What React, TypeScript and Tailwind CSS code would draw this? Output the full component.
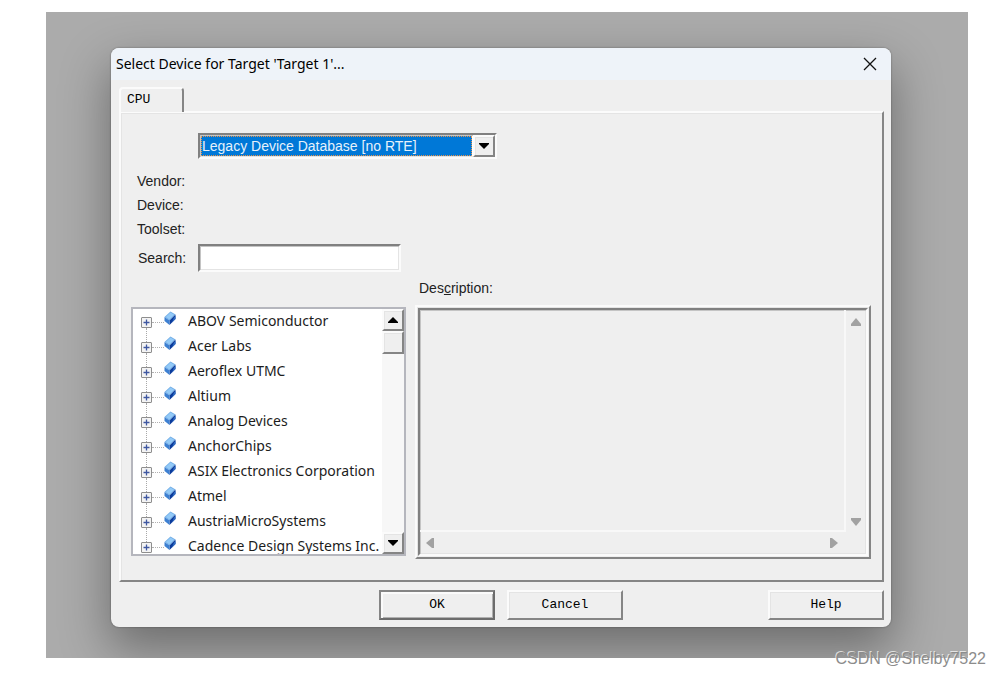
import { useState } from 'react';
import clsx from 'clsx';

const VENDORS = [
  'ABOV Semiconductor',
  'Acer Labs',
  'Aeroflex UTMC',
  'Altium',
  'Analog Devices',
  'AnchorChips',
  'ASIX Electronics Corporation',
  'Atmel',
  'AustriaMicroSystems',
  'Cadence Design Systems Inc.',
];

// Classic Windows bevels
const RAISED =
  'border-2 border-t-[#fbfbfb] border-l-[#fbfbfb] border-b-[#858585] border-r-[#858585] shadow-[inset_1px_1px_0_#e4e4e4]';
const SUNKEN =
  'border-2 border-t-[#808080] border-l-[#808080] border-b-[#fbfbfb] border-r-[#fbfbfb] shadow-[inset_1px_1px_0_#c4c4c4,inset_-1px_-1px_0_#e4e4e4]';

const LABEL = "font-['Liberation_Sans',Arial,sans-serif] text-[14px] leading-4 text-[#222]";
const MONO = "font-['Liberation_Mono',monospace] text-[13px] leading-4 text-black";

type Direction = 'up' | 'down' | 'left' | 'right';

const ARROWS: Record<Direction, string> = {
  up: 'M6 3 L11 8 L11 9 L1 9 L1 8 Z',
  down: 'M6 9 L11 4 L11 3 L1 3 L1 4 Z',
  left: 'M2 6 L8 1 L9 1 L9 11 L8 11 Z',
  right: 'M10 6 L4 1 L3 1 L3 11 L4 11 Z',
};

const MUTED_ARROWS: Record<Direction, string> = {
  up: 'M6 2 L11 8 L11 10 L1 10 L1 8 Z',
  down: 'M6 10 L11 4 L11 2 L1 2 L1 4 Z',
  left: 'M2 6 L8 1 L10 1 L10 11 L8 11 Z',
  right: 'M10 6 L4 1 L2 1 L2 11 L4 11 Z',
};

function Arrow({ direction, muted = false }: { direction: Direction; muted?: boolean }) {
  return (
    <svg viewBox="0 0 12 12" className={clsx('size-3', muted ? 'fill-[#a2a2a2]' : 'fill-black')} aria-hidden="true">
      <path d={muted ? MUTED_ARROWS[direction] : ARROWS[direction]} />
    </svg>
  );
}

function ChipIcon() {
  return (
    <svg viewBox="0 0 12 15" className="h-[15px] w-3" aria-hidden="true">
      <path d="M6.5 0.5 L11.5 3.5 L5.5 9.5 L0.5 6 Z" fill="#73aee6" />
      <path d="M6.5 1.5 L10.2 3.8 L5.4 8.4 L1.8 6 Z" fill="#93caf8" />
      <path d="M11.5 3.5 L11.5 8 L5.5 14 L5.5 9.5 Z" fill="#0b3b9b" />
      <path d="M10 6.5 L11.5 5 L11.5 8 L8 11.5 Z" fill="#2f6cc4" />
      <path d="M0.5 6 L5.5 9.5 L5.5 14 L0.5 10 Z" fill="#3d80d2" />
    </svg>
  );
}

function PlusBox() {
  return (
    <svg viewBox="0 0 11 11" className="size-[11px]" aria-hidden="true">
      <rect x="0.5" y="0.5" width="10" height="10" rx="0.5" fill="#f4f4f4" stroke="#8e8e8e" />
      <path d="M2.5 5.5 H8.5 M5.5 2.5 V8.5" stroke="#3f57a0" strokeWidth="1.3" />
    </svg>
  );
}

function VendorRow({ name, last }: { name: string; last: boolean }) {
  return (
    <li className="flex h-[25px] shrink-0 items-start">
      <div className="flex w-[11px] shrink-0 flex-col items-center self-stretch pt-2">
        <button type="button" aria-label={`Expand ${name}`} className="block">
          <PlusBox />
        </button>
        {!last && <span className="-mb-2 w-px flex-1 border-l border-dotted border-[#a8a8a8]" />}
      </div>
      <span className="mt-[13px] w-3 border-t border-dotted border-[#b0b0b0]" />
      <span className="mt-0.5 block w-6">
        <ChipIcon />
      </span>
      <span className="pt-0.5 font-['Noto_Sans','Open_Sans',sans-serif] text-[14px] leading-5 whitespace-nowrap text-[#1c1c1c]">
        {name}
      </span>
    </li>
  );
}

function VendorTree() {
  return (
    <div className="flex h-[249px] w-[275px] shrink-0 border-2 border-[#b5b6bd] bg-white">
      <ul className="flex min-w-0 flex-1 flex-col overflow-hidden pl-2">
        {VENDORS.map((name, i) => (
          <VendorRow key={name} name={name} last={i === VENDORS.length - 1} />
        ))}
      </ul>
      <div className="flex w-[22px] flex-col bg-[#f7f7f7]">
        <button type="button" aria-label="Scroll up" className={clsx('flex h-[22px] items-center justify-center bg-[#efefef]', RAISED)}>
          <Arrow direction="up" />
        </button>
        <div className={clsx('h-[23px] bg-[#efefef]', RAISED)} />
        <button type="button" aria-label="Scroll down" className={clsx('mt-auto flex h-[22px] items-center justify-center bg-[#efefef]', RAISED)}>
          <Arrow direction="down" />
        </button>
      </div>
    </div>
  );
}

function DescriptionBox() {
  return (
    <div className={clsx('h-[254px] p-px', RAISED)}>
      <div className={clsx('flex h-full flex-col', SUNKEN)}>
        <div className="flex min-h-0 flex-1">
          <textarea
            id="description"
            readOnly
            className="min-w-0 flex-1 resize-none border-r-2 border-b-2 border-[#f8f8f8] bg-transparent outline-none"
          />
          <div className="flex w-5 flex-col items-center justify-between pt-1.5 pb-1">
            <Arrow direction="up" muted />
            <Arrow direction="down" muted />
          </div>
        </div>
        <div className="flex h-[22px] items-center justify-between pr-[26px] pl-1">
          <Arrow direction="left" muted />
          <Arrow direction="right" muted />
        </div>
      </div>
    </div>
  );
}

function CpuPanel() {
  const [search, setSearch] = useState('');

  return (
    <div className={clsx('-mt-px pr-[11px] pb-[21px] pl-2.5', RAISED)}>
      <div className="pt-5 pl-[67px]">
        <div className={clsx('flex h-[26px] w-[299px] bg-white', SUNKEN)}>
          <select
            aria-label="Device database"
            className="m-px min-w-0 flex-1 appearance-none border border-dotted border-[#e8934a] bg-[#0078d7] font-['Liberation_Sans',Arial,sans-serif] text-[14px] leading-4 text-[#e6f1fb] outline-none"
          >
            <option>Legacy Device Database [no RTE]</option>
          </select>
          <span className={clsx('flex w-[22px] items-center justify-center bg-[#efefef]', RAISED)}>
            <Arrow direction="down" />
          </span>
        </div>
      </div>

      <div className={clsx('flex flex-col gap-2 pt-3.5 pl-1.5', LABEL)}>
        <p>Vendor:</p>
        <p>Device:</p>
        <p>Toolset:</p>
      </div>

      <div className="flex items-center pt-[7px] pl-[7px]">
        <label htmlFor="search" className={clsx('w-[60px]', LABEL)}>
          Search:
        </label>
        <input
          id="search"
          type="text"
          value={search}
          onChange={(e) => setSearch(e.target.value)}
          className={clsx('h-7 w-[203px] bg-white px-1 text-sm outline-none', SUNKEN)}
        />
      </div>

      <div className="flex items-end gap-[9px] pt-2">
        <div className="pb-[3px]">
          <VendorTree />
        </div>
        <div className="min-w-0 flex-1">
          <label htmlFor="description" className={clsx('mb-[9px] block pl-1', LABEL)}>
            Des<u>c</u>ription:
          </label>
          <DescriptionBox />
        </div>
      </div>
    </div>
  );
}

export default function App() {
  return (
    <main className="relative bg-white pt-3 pr-8 pb-[19px] pl-[46px]">
      <div className="overflow-hidden bg-[#ababab] pt-9 pr-[77px] pb-[31px] pl-[65px]">
        <section
          aria-label="Select Device"
          className="overflow-hidden rounded-lg bg-[#efefef] shadow-[0_0_2px_rgba(0,0,0,0.4),0_20px_48px_2px_rgba(0,0,0,0.36)]"
        >
          <header className="flex h-8 items-center justify-between bg-[#eef3f9] pr-3.5 pl-[5px]">
            <h1 className="font-['Noto_Sans','Open_Sans',sans-serif] text-[14px] leading-5 text-black">
              Select Device for Target 'Target 1'...
            </h1>
            <button type="button" aria-label="Close">
              <svg viewBox="0 0 14 14" className="size-3.5" aria-hidden="true">
                <path d="M1 1 L13 13 M13 1 L1 13" stroke="#111" strokeWidth="1.3" />
              </svg>
            </button>
          </header>

          <div className="pt-[7px] pr-[7px] pb-[7px] pl-2">
            <div role="tablist">
              <button
                type="button"
                role="tab"
                aria-selected="true"
                className={clsx(
                  'relative block h-[25px] w-[65px] rounded-t-sm border-t-2 border-r-2 border-l-2 border-t-[#fbfbfb] border-r-[#858585] border-l-[#fbfbfb] bg-[#efefef] pb-0.5 pl-1.5 text-left',
                  MONO,
                )}
              >
                CPU
              </button>
            </div>
            <CpuPanel />

            <div className="flex items-center gap-3 pt-2">
              <button
                type="button"
                className={clsx('ml-auto h-[30px] w-[116px] border-2 border-t-[#858585] border-r-[#6c6c6c] border-b-[#6c6c6c] border-l-[#858585] shadow-[inset_2px_2px_0_#fbfbfb,inset_-1px_-1px_0_#b0b0b0]', MONO)}
              >
                OK
              </button>
              <button type="button" className={clsx('h-[30px] w-[116px]', RAISED, MONO)}>
                Cancel
              </button>
              <button type="button" className={clsx('ml-[133px] h-[30px] w-[116px]', RAISED, MONO)}>
                Help
              </button>
            </div>
          </div>
        </section>
      </div>
      <p className="absolute right-3.5 bottom-2 font-['Liberation_Sans',Arial,sans-serif] text-[16px] leading-5 text-[#8c8c8c] [text-shadow:-1px_-1px_0_#ffffffb0]">
        CSDN @Shelby7522
      </p>
    </main>
  );
}
